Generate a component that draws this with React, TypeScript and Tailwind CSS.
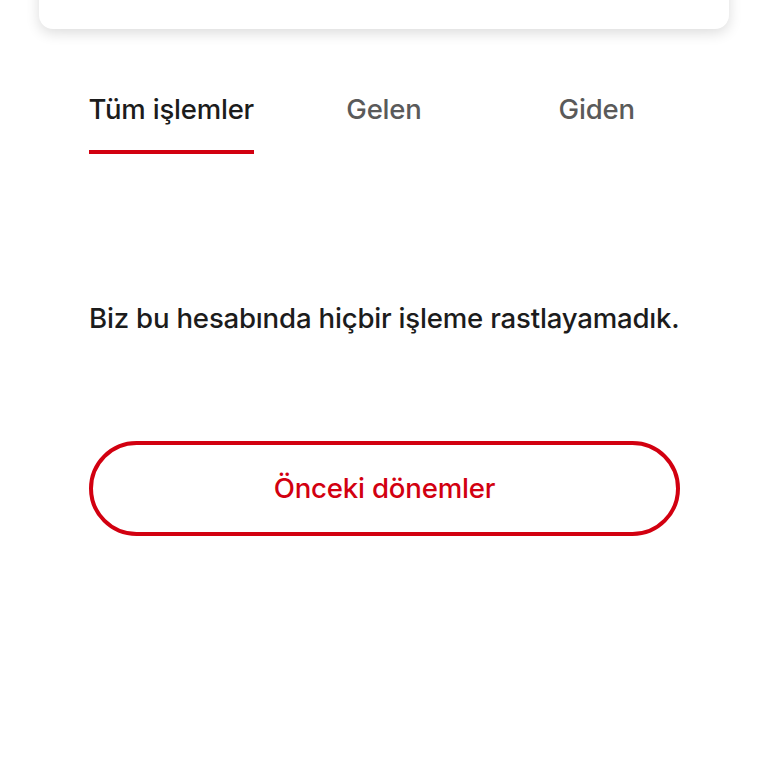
export default function App() {
  const tabs = ["Tüm işlemler", "Gelen", "Giden"];
  return (
    <div
      className="w-[768px] h-[768px] bg-white overflow-hidden relative"
      style={{ fontFamily: "Inter, 'Noto Sans', sans-serif" }}
    >
      {/* account card peeking from above */}
      <div className="mx-[39px] -mt-[20px] h-[49px] bg-white rounded-b-[14px] shadow-[0_4px_14px_rgba(0,0,0,0.14)]" />

      {/* tabs */}
      <div className="grid grid-cols-3 mx-[65px] mt-[60px]">
        {tabs.map((t, i) => (
          <div key={t} className="flex flex-col items-center">
            <div className="relative">
              <span
                className={
                  "block text-[27.5px] leading-[40px] font-medium tracking-[-0.2px] " +
                  (i === 0 ? "text-[#1c1c1c]" : "text-[#5a5a5a]")
                }
              >
                {t}
              </span>
              <div className={"h-[4px] mt-[21px] " + (i === 0 ? "bg-[#d20010]" : "bg-transparent")} />
            </div>
          </div>
        ))}
      </div>

      {/* empty state */}
      <p className="ml-[89px] mt-[144px] text-[27.6px] leading-[40px] font-medium text-[#1c1c1c] tracking-[-0.2px]">
        Biz bu hesabında hiçbir işleme rastlayamadık.
      </p>

      <button className="ml-[89px] mt-[103px] w-[591px] h-[95px] rounded-full border-[4px] border-[#d20010] flex items-center justify-center text-[27.6px] font-medium text-[#d20010] tracking-[-0.2px]">
        Önceki dönemler
      </button>
    </div>
  );
}
